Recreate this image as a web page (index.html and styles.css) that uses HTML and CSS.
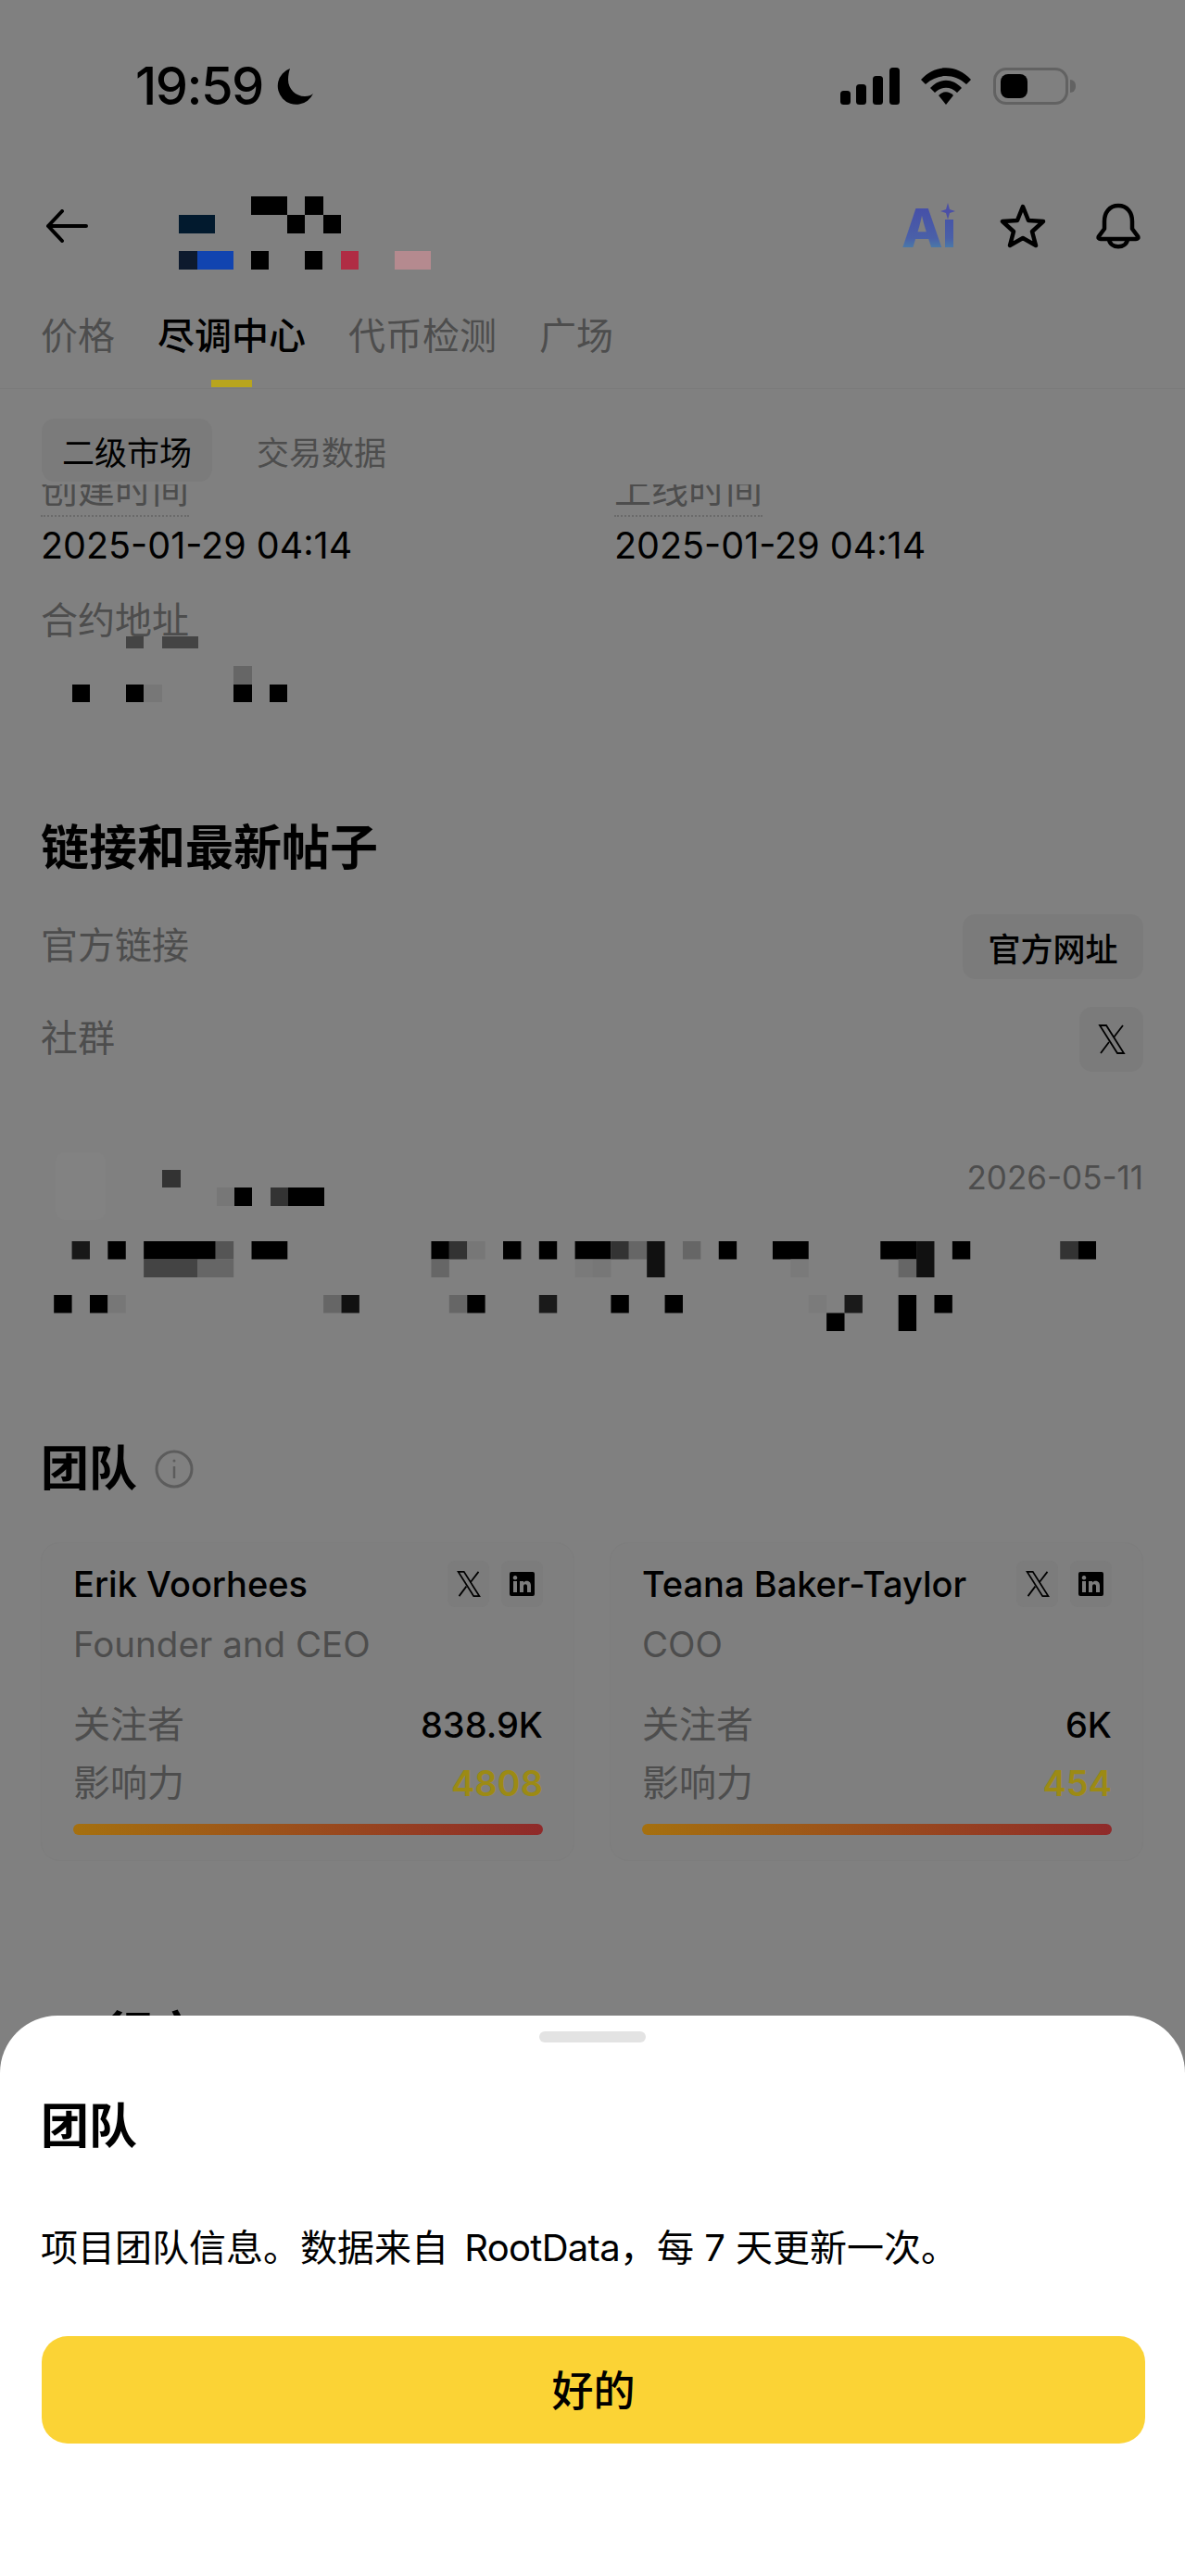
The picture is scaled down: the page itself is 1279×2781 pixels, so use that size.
FILE: index.html
```html
<!DOCTYPE html>
<html lang="zh-CN">
<head>
  <meta charset="UTF-8" />
  <meta name="viewport" content="width=device-width, initial-scale=1.0"/>
  <title>尽调中心</title>
  <link rel="stylesheet" href="styles.css">
</head>
<body>
  <div class="screen">
    <div class="status">
      <div class="status-left">
        <span class="clock">19:59</span>
        <svg class="moon" width="42" height="44" viewBox="0 0 42 42"><path d="M15 2 A20 20 0 1 0 40 29 C38 31 35 32 31 32 C21 32 13 24 13 14 C13 9 14 5 15 2 Z" fill="#000"/></svg>
      </div>
      <div class="status-right">
        <svg width="64" height="40" viewBox="0 0 64 40"><rect x="0" y="25" width="11" height="15" rx="3.5"/><rect x="17" y="18" width="11" height="22" rx="3.5"/><rect x="35" y="9" width="11" height="31" rx="3.5"/><rect x="53" y="0" width="11" height="40" rx="3.5"/></svg>
        <svg width="56" height="40" viewBox="0 0 56 40"><path d="M1 13 C16 -4 40 -4 55 13 L50 18 C37 6 19 6 6 18 Z"/><path d="M11 22 C21 11 35 11 45 22 L40 27 C33 20 23 20 16 27 Z"/><path d="M20 30 C25 25 31 25 36 30 L28 40 Z"/></svg>
        <div class="battery"><div class="battery-fill"></div></div>
        <div class="battery-nub"></div>
      </div>
    </div>

    <div class="nav">
      <svg class="back" width="46" height="36" viewBox="0 0 46 36" fill="none" stroke="#000" stroke-width="4" stroke-linecap="round" stroke-linejoin="round"><path d="M44 18 H3 M18 2 L3 18 L18 34"/></svg>
      <svg class="title-mosaic" width="330" height="80" viewBox="195 212 330 80">
        <rect x="195" y="232" width="39" height="20" fill="#021a2e"/>
        <rect x="273" y="212" width="39" height="20" fill="#000"/>
        <rect x="331" y="212" width="20" height="20" fill="#000"/>
        <rect x="312" y="232" width="19" height="20" fill="#000"/>
        <rect x="351" y="232" width="19" height="20" fill="#000"/>
        <rect x="195" y="271" width="20" height="20" fill="#0d1a2e"/>
        <rect x="215" y="271" width="39" height="20" fill="#1144b0"/>
        <rect x="273" y="271" width="19" height="20" fill="#000"/>
        <rect x="331" y="271" width="19" height="20" fill="#000"/>
        <rect x="370" y="271" width="19" height="20" fill="#b02c44"/>
        <rect x="428" y="271" width="39" height="20" fill="#b58a8f"/>
      </svg>
      <div class="nav-actions">
        <div class="ai-mark">
          <span class="ai-text">Ai</span>
          <svg class="ai-spark" width="16" height="18" viewBox="0 0 16 18"><path d="M8 0 L10 7 L16 9 L10 11 L8 18 L6 11 L0 9 L6 7 Z" fill="#4b50a6"/></svg>
        </div>
        <svg width="50" height="48" viewBox="0 0 50 48" fill="none" stroke="#000" stroke-width="4.500" stroke-linejoin="round"><path d="M25 3 L31 18 L47 19 L35 30 L39 45 L25 37 L11 45 L15 30 L3 19 L19 18 Z"/></svg>
        <svg width="48" height="50" viewBox="0 0 48 50" fill="none" stroke="#000" stroke-width="4.500" stroke-linejoin="round"><path d="M24 3 C14 3 9 11 9 20 V28 L3 36 C2 38 3 39 5 39 H43 C45 39 46 38 45 36 L39 28 V20 C39 11 34 3 24 3 Z"/><path d="M14 39 C15 50 33 50 34 39"/></svg>
      </div>
    </div>

    <div class="tabs">
      <span class="tab">价格</span>
      <span class="tab tab-active">尽调中心</span>
      <span class="tab">代币检测</span>
      <span class="tab">广场</span>
    </div>

    <div class="subtabs">
      <span class="subtab subtab-active">二级市场</span>
      <span class="subtab">交易数据</span>
    </div>

    <div class="content">
      <div class="info-grid">
        <div>
          <span class="info-label">创建时间</span>
          <div class="info-value">2025-01-29 04:14</div>
        </div>
        <div>
          <span class="info-label">上线时间</span>
          <div class="info-value">2025-01-29 04:14</div>
        </div>
      </div>

      <div class="contract-label">合约地址</div>
      <svg class="contract-mosaic" width="310" height="71" viewBox="0 685 310 71">
        <rect x="136" y="685" width="19" height="13" fill="#444"/>
        <rect x="175" y="685" width="39" height="13" fill="#444"/>
        <rect x="252" y="717" width="20" height="20" fill="#666"/>
        <rect x="78" y="737" width="19" height="19" fill="#000"/>
        <rect x="136" y="737" width="19" height="19" fill="#000"/>
        <rect x="155" y="737" width="20" height="19" fill="#777"/>
        <rect x="252" y="737" width="20" height="19" fill="#000"/>
        <rect x="291" y="737" width="19" height="19" fill="#000"/>
      </svg>

      <h2 class="section-title links-title">链接和最新帖子</h2>

      <div class="link-row first-row">
        <span class="link-label">官方链接</span>
        <span class="pill-btn">官方网址</span>
      </div>
      <div class="link-row second-row">
        <span class="link-label">社群</span>
        <span class="pill-btn pill-icon">
          <svg width="30" height="32" viewBox="0 0 30 32" fill="none" stroke="#000" stroke-width="1.800"><path d="M2 1 H9 L28 31 H21 Z"/><path d="M27 1 L17 14 M12 19 L3 31"/></svg>
        </span>
      </div>

      <div class="post">
        <div class="post-head">
          <div class="avatar"></div>
          <svg class="author-mosaic" width="290" height="39" viewBox="60 1261 290 39">
            <rect x="175" y="1261" width="20" height="19" fill="#333"/>
            <rect x="234" y="1280" width="19" height="20" fill="#777"/>
            <rect x="253" y="1280" width="19" height="20" fill="#000"/>
            <rect x="292" y="1280" width="19" height="20" fill="#333"/>
            <rect x="311" y="1280" width="39" height="20" fill="#000"/>
          </svg>
          <span class="post-date">2026-05-11</span>
        </div>
        <svg class="post-mosaic" width="1279" height="97" viewBox="0 1338 1286 97" preserveAspectRatio="none">
          <g fill="#000">
            <rect x="78" y="1338" width="19.500" height="19.500" fill="#181818"/>
            <rect x="117" y="1338" width="19.500" height="19.500"/>
            <rect x="156" y="1338" width="78" height="19.500"/>
            <rect x="234" y="1338" width="19.500" height="19.500" fill="#555"/>
            <rect x="273" y="1338" width="39" height="19.500"/>
            <rect x="468" y="1338" width="19.500" height="19.500"/>
            <rect x="487.500" y="1338" width="19.500" height="19.500" fill="#333"/>
            <rect x="507" y="1338" width="19.500" height="19.500" fill="#777"/>
            <rect x="546" y="1338" width="19.500" height="19.500"/>
            <rect x="585" y="1338" width="19.500" height="19.500"/>
            <rect x="624" y="1338" width="39" height="19.500"/>
            <rect x="663" y="1338" width="19.500" height="19.500" fill="#333"/>
            <rect x="682.500" y="1338" width="19.500" height="19.500" fill="#666"/>
            <rect x="702" y="1338" width="19.500" height="39" fill="#111"/>
            <rect x="741" y="1338" width="19.500" height="19.500" fill="#666"/>
            <rect x="780" y="1338" width="19.500" height="19.500"/>
            <rect x="838.500" y="1338" width="39" height="19.500"/>
            <rect x="955.500" y="1338" width="39" height="19.500"/>
            <rect x="994.500" y="1338" width="19.500" height="39" fill="#111"/>
            <rect x="1033.500" y="1338" width="19.500" height="19.500"/>
            <rect x="1150.500" y="1338" width="19.500" height="19.500" fill="#333"/>
            <rect x="1170" y="1338" width="19.500" height="19.500"/>
            <rect x="156" y="1357.500" width="58.500" height="19.500" fill="#444"/>
            <rect x="214.500" y="1357.500" width="39" height="19.500" fill="#666"/>
            <rect x="468" y="1357.500" width="19.500" height="19.500" fill="#666"/>
            <rect x="624" y="1357.500" width="19.500" height="19.500" fill="#7a7a7a"/>
            <rect x="643.500" y="1357.500" width="19.500" height="19.500" fill="#777"/>
            <rect x="858" y="1357.500" width="19.500" height="19.500" fill="#7a7a7a"/>
            <rect x="975" y="1357.500" width="19.500" height="19.500" fill="#666"/>
            <rect x="58.500" y="1396" width="19.500" height="19.500"/>
            <rect x="97.500" y="1396" width="19.500" height="19.500"/>
            <rect x="117" y="1396" width="19.500" height="19.500" fill="#777"/>
            <rect x="351" y="1396" width="19.500" height="19.500" fill="#666"/>
            <rect x="370.500" y="1396" width="19.500" height="19.500" fill="#111"/>
            <rect x="487.500" y="1396" width="19.500" height="19.500" fill="#666"/>
            <rect x="507" y="1396" width="19.500" height="19.500"/>
            <rect x="585" y="1396" width="19.500" height="19.500" fill="#1a1a1a"/>
            <rect x="663" y="1396" width="19.500" height="19.500"/>
            <rect x="721.500" y="1396" width="19.500" height="19.500"/>
            <rect x="877.500" y="1396" width="19.500" height="19.500" fill="#7b7b7b"/>
            <rect x="916.500" y="1396" width="19.500" height="19.500" fill="#1a1a1a"/>
            <rect x="975" y="1396" width="19.500" height="39"/>
            <rect x="1014" y="1396" width="19.500" height="19.500"/>
            <rect x="897" y="1415.500" width="19.500" height="19.500"/>
          </g>
        </svg>
      </div>

      <div class="team-title">
        <h2 class="section-title">团队</h2>
        <svg width="42" height="42" viewBox="0 0 42 42" fill="none" stroke="#5c5c5c" stroke-width="3"><circle cx="21" cy="21" r="19"/><path d="M21 18 V31" stroke-width="2.500"/><circle cx="21" cy="12" r="1.500" fill="#5c5c5c" stroke="none"/></svg>
      </div>

      <div class="team-grid">
        <div class="member">
          <div class="member-head">
            <span class="member-name">Erik Voorhees</span>
            <div class="member-links">
              <span class="social">
                <svg width="28" height="28" viewBox="0 0 30 32" fill="none" stroke="#000" stroke-width="2"><path d="M2 1 H9 L28 31 H21 Z"/><path d="M27 1 L17 14 M12 19 L3 31"/></svg>
              </span>
              <span class="social">
                <svg width="27" height="26" viewBox="0 0 27 26"><path fill-rule="evenodd" d="M2 0 H25 A2 2 0 0 1 27 2 V24 A2 2 0 0 1 25 26 H2 A2 2 0 0 1 0 24 V2 A2 2 0 0 1 2 0 Z M4 10 V22 H8 V10 Z M6 4 A2.300 2.300 0 1 0 6.010 4 Z M11 10 V22 H15 V15.500 C15 12.500 19 12.500 19 15.500 V22 H23 V14.500 C23 9 17 8.500 15 11.500 V10 Z"/></svg>
              </span>
            </div>
          </div>
          <div class="member-role">Founder and CEO</div>
          <div class="stat stat-first"><span class="stat-label">关注者</span><span class="stat-value">838.9K</span></div>
          <div class="stat stat-second"><span class="stat-label">影响力</span><span class="stat-score">4808</span></div>
          <div class="score-bar"></div>
        </div>

        <div class="member">
          <div class="member-head">
            <span class="member-name">Teana Baker-Taylor</span>
            <div class="member-links">
              <span class="social">
                <svg width="28" height="28" viewBox="0 0 30 32" fill="none" stroke="#000" stroke-width="2"><path d="M2 1 H9 L28 31 H21 Z"/><path d="M27 1 L17 14 M12 19 L3 31"/></svg>
              </span>
              <span class="social">
                <svg width="27" height="26" viewBox="0 0 27 26"><path fill-rule="evenodd" d="M2 0 H25 A2 2 0 0 1 27 2 V24 A2 2 0 0 1 25 26 H2 A2 2 0 0 1 0 24 V2 A2 2 0 0 1 2 0 Z M4 10 V22 H8 V10 Z M6 4 A2.300 2.300 0 1 0 6.010 4 Z M11 10 V22 H15 V15.500 C15 12.500 19 12.500 19 15.500 V22 H23 V14.500 C23 9 17 8.500 15 11.500 V10 Z"/></svg>
              </span>
            </div>
          </div>
          <div class="member-role">COO</div>
          <div class="stat stat-first"><span class="stat-label">关注者</span><span class="stat-value">6K</span></div>
          <div class="stat stat-second"><span class="stat-label">影响力</span><span class="stat-score">454</span></div>
          <div class="score-bar"></div>
        </div>
      </div>

      <h2 class="section-title next-title">行市</h2>
    </div>

    <div class="sheet">
      <div class="sheet-handle"></div>
      <h2 class="section-title sheet-title">团队</h2>
      <p class="sheet-text">项目团队信息。数据来自 <span class="latin">RootData</span>，每 7 天更新一次。</p>
      <button class="sheet-btn">好的</button>
    </div>
  </div>
</body>
</html>
```

FILE: styles.css
```css
* {
  box-sizing: border-box;
}

body {
  margin: 0;
  font-family: Inter, "Noto Sans CJK SC", sans-serif;
  color: #000;
}

.screen {
  position: relative;
  width: 1279px;
  height: 2781px;
  overflow: hidden;
  background: #808080;
}

/* status bar */
.status {
  height: 186px;
  padding: 0 118px 0 146px;
  display: flex;
  align-items: center;
  justify-content: space-between;
}

.status-left {
  display: flex;
  align-items: center;
  gap: 14px;
}

.clock {
  font-size: 56px;
  font-weight: 500;
  letter-spacing: -1.5px;
}

.status-right {
  display: flex;
  align-items: center;
  gap: 22px;
}

.battery {
  width: 81px;
  height: 40px;
  margin: 0 -20px 0 1px;
  padding: 4px 5px;
  border: 3px solid #626262;
  border-radius: 14px;
}

.battery-fill {
  width: 29px;
  height: 26px;
  background: #000;
  border-radius: 8px;
}

.battery-nub {
  width: 6px;
  height: 14px;
  background: #626262;
  border-radius: 0 6px 6px 0;
}

/* nav */
.nav {
  height: 116px;
  padding: 0 48px 0 49px;
  display: flex;
  align-items: center;
}

.title-mosaic {
  margin-left: 98px;
  margin-top: 16px;
}

.nav-actions {
  margin-left: auto;
  display: flex;
  align-items: center;
  gap: 54px;
}

.ai-mark {
  position: relative;
  width: 56px;
  height: 48px;
  margin-right: -4px;
}

.ai-text {
  display: block;
  font-size: 58px;
  font-weight: 800;
  line-height: 56px;
  margin-top: -2px;
  letter-spacing: -1px;
  background: linear-gradient(180deg, #454ca8, #4a60a8 70%, #4a8aa8);
  -webkit-background-clip: text;
  background-clip: text;
  color: transparent;
}

.ai-spark {
  position: absolute;
  top: -1px;
  right: -2px;
  background: #808080;
}

/* tabs */
.tabs {
  height: 118px;
  padding: 41px 44px 0;
  display: flex;
  gap: 46px;
  border-bottom: 1px solid #7b7b7b;
}

.tab {
  position: relative;
  font-size: 40px;
  line-height: 40px;
  height: 40px;
  color: #4d4d4d;
}

.tab-active {
  color: #000;
  font-weight: 500;
}

.tab-active::after {
  content: "";
  position: absolute;
  left: 58px;
  bottom: -35px;
  width: 44px;
  height: 8px;
  background: #b8a51e;
}

.subtabs {
  height: 103px;
  padding: 32px 45px 3px;
  display: flex;
  gap: 48px;
}

.subtab {
  height: 68px;
  display: flex;
  align-items: center;
  border-radius: 14px;
  font-size: 35px;
  color: #4d4d4d;
}

.subtab-active {
  width: 184px;
  justify-content: center;
  background: #7b7b7b;
  color: #000;
}

/* scrolled content */
.content {
  height: 2258px;
  padding: 0 45px 0 44px;
  overflow: hidden;
}

.info-grid {
  margin-top: -14px;
  display: grid;
  grid-template-columns: 619px 1fr;
}

.info-label {
  display: inline-block;
  padding-bottom: 7px;
  font-size: 40px;
  line-height: 40px;
  color: #4d4d4d;
  border-bottom: 2px dotted #6a6a6a;
}

.info-value {
  margin-top: 11px;
  font-size: 39.500px;
  line-height: 40px;
}

.contract-label {
  margin-top: 41px;
  font-size: 40px;
  line-height: 40px;
  color: #4d4d4d;
}

.contract-mosaic {
  display: block;
  margin: -3px 0 0 -44px;
}

.section-title {
  margin: 0;
  font-size: 52px;
  line-height: 60px;
  font-weight: 700;
}

.links-title {
  margin-top: 128px;
}

.link-row {
  height: 70px;
  display: flex;
  align-items: center;
  justify-content: space-between;
}

.first-row {
  margin-top: 41px;
}

.second-row {
  margin-top: 30px;
}

.link-label {
  padding-bottom: 8px;
  font-size: 40px;
  color: #4d4d4d;
}

.pill-btn {
  width: 195px;
  height: 70px;
  display: flex;
  align-items: center;
  justify-content: center;
  background: #7b7b7b;
  border-radius: 14px;
  font-size: 35px;
  font-weight: 500;
}

.pill-icon {
  width: 69px;
}

.post {
  margin-top: 87px;
}

.post-head {
  height: 73px;
  display: flex;
  align-items: flex-start;
}

.avatar {
  width: 54px;
  height: 73px;
  margin-left: 16px;
  background: #828282;
  border-radius: 10px;
}

.author-mosaic {
  margin: 19px 0 0 -54px;
}

.post-date {
  margin-left: auto;
  margin-top: 7px;
  font-size: 35px;
  line-height: 40px;
  color: #4d4d4d;
}

.post-mosaic {
  display: block;
  margin: 23px 0 0 -44px;
}

.team-title {
  margin-top: 119px;
  display: flex;
  align-items: center;
  gap: 19px;
}

.team-grid {
  margin-top: 49px;
  display: grid;
  grid-template-columns: 1fr 1fr;
  gap: 38px;
}

.member {
  height: 344px;
  padding: 20px 33px 0 34px;
  background: #7f7f7f;
  border: 1px solid #7d7d7d;
  border-radius: 20px;
}

.member-head {
  height: 48px;
  display: flex;
  align-items: center;
  justify-content: space-between;
}

.member-name {
  font-size: 38px;
  font-weight: 500;
  white-space: nowrap;
}

.member-links {
  display: flex;
  gap: 13px;
}

.social {
  width: 45px;
  height: 50px;
  display: flex;
  align-items: center;
  justify-content: center;
  background: #7c7c7c;
  border-radius: 8px;
}

.member-role {
  margin-top: 19px;
  font-size: 38.500px;
  line-height: 44px;
  color: #4d4d4d;
}

.stat {
  display: flex;
  justify-content: space-between;
  align-items: center;
  height: 40px;
  line-height: 40px;
}

.stat-first {
  margin-top: 45px;
}

.stat-second {
  margin-top: 23px;
}

.stat-label {
  font-size: 40px;
  color: #4d4d4d;
}

.stat-value {
  font-size: 38px;
  font-weight: 500;
}

.stat-score {
  font-size: 38px;
  font-weight: 600;
  color: #9c8a14;
}

.score-bar {
  height: 12px;
  margin-top: 24px;
  border-radius: 6px;
  background: linear-gradient(90deg, #a5700f, #8f2a2a);
}

.next-title {
  margin: 158px 0 0 69px;
}

/* bottom sheet */
.sheet {
  position: absolute;
  left: 0;
  right: 0;
  top: 2176px;
  bottom: 0;
  padding: 17px 44px 0 44px;
  background: #fff;
  border-radius: 62px 62px 0 0;
}

.sheet-handle {
  width: 115px;
  height: 12px;
  margin: 0 auto;
  background: #e3e3e3;
  border-radius: 6px;
}

.sheet-title {
  margin-top: 61px;
}

.sheet-text {
  margin: 76px 0 0;
  font-size: 40px;
  line-height: 50px;
}

.latin {
  margin-left: 6px;
  letter-spacing: -0.700px;
}

.sheet-btn {
  display: block;
  width: 1191px;
  height: 116px;
  margin: 70px 0 0 1px;
  padding-bottom: 4px;
  border: none;
  border-radius: 28px;
  background: #fbd335;
  font-family: inherit;
  font-size: 45px;
  font-weight: 500;
  color: #000;
}
```
